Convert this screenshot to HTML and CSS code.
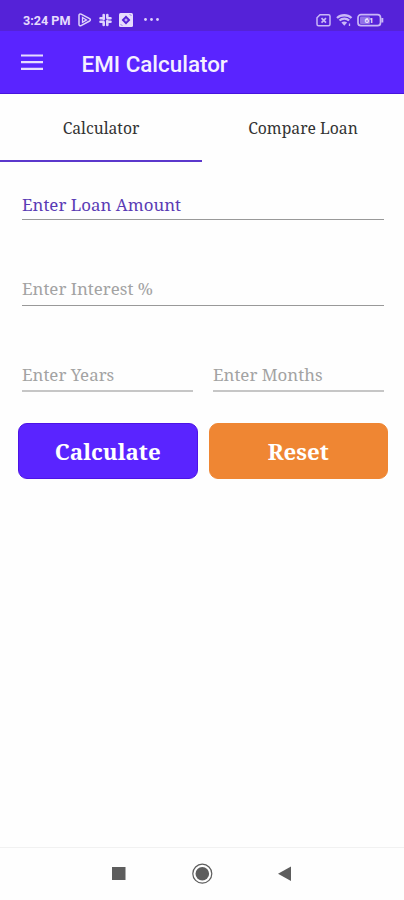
FILE: index.html
```
<!DOCTYPE html>
<html lang="en">
<head>
<meta charset="utf-8">
<meta name="viewport" content="width=device-width, initial-scale=1">
<title>EMI Calculator</title>
<link rel="stylesheet" href="styles.css">
</head>
<body>
<div class="status">
  <span class="time">3:24 PM</span>
  <svg class="notices" width="84" height="16" viewBox="0 0 84 16" fill="none" stroke="#ded2fc">
    <path d="M2 3.400c0-1.300 1-1.800 2.100-1.200l8.500 4.500c1 .6 1 1.700 0 2.300l-8.500 4.600C3 14.200 2 13.600 2 12.500z" stroke-width="1.500"/>
    <path d="M5.500 5.500l4 2.400-4 2.500z" stroke-width="1.300"/>
    <g stroke-width="2.600" stroke-linecap="round"><path d="M26.700 3v4M30.300 3v2.500M26.700 10.500V13M30.300 9v4M23.500 6.200h2.500M30.500 6.200h3M23.500 9.800h3M31 9.800h2.500"/></g>
    <rect x="42" y="1" width="14" height="14" rx="1.500" fill="#e6dcfd" stroke="none"/>
    <path d="M49 3.600L53.400 8 49 12.400 44.600 8z" fill="#5522d6" stroke="none"/>
    <path d="M47.500 8h3M49 6.500v3" stroke-width="1"/>
    <path d="M44 12.500l1 1M53 2.500l1 1" stroke="#5522d6"/>
    <g fill="#ded2fc" stroke="none"><circle cx="68.500" cy="7.500" r="1.400"/><circle cx="74.500" cy="7.500" r="1.400"/><circle cx="80.500" cy="7.500" r="1.400"/></g>
  </svg>
  <svg class="system" width="70" height="16" viewBox="0 0 70 16" fill="none" stroke="#c9b7f7">
    <path d="M5 2.700h8.500c1 0 1.500.5 1.500 1.500v8c0 1-.5 1.500-1.500 1.500h-10c-1 0-1.500-.5-1.500-1.500V5.700z" stroke-width="1.500"/>
    <path d="M6.500 6.200l4.500 4.500M11 6.200l-4.500 4.500" stroke-width="1.700"/>
    <path d="M22 6c4-3.700 10.500-3.700 14.500 0M24.500 8.500c2.700-2.500 7-2.500 9.600 0" stroke-width="2.300"/>
    <path d="M26.400 10.500c1.700-1.300 3.900-1.300 5.700 0L29.300 13.800z" fill="#c9b7f7" stroke="none"/>
    <path d="M34.500 11.500v2.500" stroke-width="1.300"/>
    <rect x="43" y="2.700" width="22.500" height="11" rx="3" stroke-width="1.700"/>
    <path d="M67.300 6v4.500" stroke-width="2"/>
    <rect x="45" y="4.500" width="10" height="7.400" rx="1" fill="#9270e8" stroke="none"/>
    <text x="54" y="11.200" text-anchor="middle" class="charge">61</text>
  </svg>
</div>
<header class="appbar">
  <svg width="22" height="16" viewBox="0 0 22 16"><path d="M0 1.500h22M0 8.200h22M0 14.900h22" stroke="#e6dcff" stroke-width="2.200"/></svg>
  <h1>EMI Calculator</h1>
</header>
<nav class="tabs">
  <div class="tab active"><span>Calculator</span></div>
  <div class="tab"><span>Compare Loan</span></div>
</nav>
<main>
  <div class="field focus"><span>Enter Loan Amount</span></div>
  <div class="field interest"><span>Enter Interest %</span></div>
  <div class="pair">
    <div class="field"><span>Enter Years</span></div>
    <div class="field"><span>Enter Months</span></div>
  </div>
  <div class="actions">
    <button class="calculate">Calculate</button>
    <button class="reset">Reset</button>
  </div>
</main>
<footer class="navbar">
  <svg width="404" height="52" viewBox="0 0 404 52">
    <rect x="112" y="19" width="13.500" height="13" fill="#5d5d5d"/>
    <circle cx="202.300" cy="25.700" r="9.500" fill="none" stroke="#5d5d5d" stroke-width="1.200"/>
    <circle cx="202.300" cy="25.700" r="6.800" fill="#5d5d5d"/>
    <path d="M278 25.700L291 18.500v14.500z" fill="#5d5d5d"/>
  </svg>
</footer>
</body>
</html>
```
FILE: styles.css
```
* { box-sizing: border-box; }
body {
  margin: 0;
  height: 900px;
  display: flex;
  flex-direction: column;
  background: #fefefe;
  font-family: "Noto Serif", "Droid Serif", "DejaVu Serif Condensed", "DejaVu Serif", serif;
  overflow: hidden;
}
.status {
  height: 31px;
  display: flex;
  align-items: center;
  padding: 9px 19px 0 23px;
  background: #5522d8;
  color: #e6dcfd;
  font: 700 12.600px/16px Roboto, sans-serif;
}
.status svg { display: block; }
.time { width: 54px; white-space: nowrap; padding-top: 1px; }
.system { margin-left: auto; }
.charge { font: 700 8px Roboto, sans-serif; fill: #efe8ff; stroke: none; }
.appbar {
  height: 63px;
  display: flex;
  align-items: center;
  gap: 38.500px;
  padding-left: 21px;
  background: #5a24ff;
  border-bottom: 1px solid #4714dd;
}
.appbar h1 {
  margin: 4px 0 0;
  color: #f5f0ff;
  font: 500 22.400px/30px Roboto, sans-serif;
}
.tabs { height: 68px; display: flex; }
.tab {
  flex: 1;
  padding-top: 22px;
  text-align: center;
  font-size: 15.700px;
  line-height: 24px;
  color: #333;
}
.tab.active { border-bottom: 2px solid #5b38cc; }
main { flex: 1; padding: 0 20px 0 22px; }
.field {
  height: 86px;
  padding-top: 30px;
  border-bottom: 1px solid #999;
  font-size: 16.900px;
  line-height: 25px;
  color: #a3a3a3;
  white-space: nowrap;
}
.field.focus { height: 58px; color: #5a3cb5; }
.field.interest { padding-top: 56px; }
.pair { display: flex; gap: 20px; }
.pair .field { flex: 1; padding-top: 56px; border-bottom: 2px solid #c6c6c6; }
.actions { display: flex; gap: 11px; margin: 31px -4px 0; }
button {
  flex: 1 1 0;
  min-width: 0;
  height: 56px;
  padding: 0;
  border: 1px solid transparent;
  border-radius: 9px;
  color: #fff;
  font: inherit;
  font-weight: 700;
  font-size: 22.300px;
}
.calculate { background: #5a24ff; border-color: #4d14e5; }
.reset { background: #ef8633; border-color: #ef8633; }
.navbar { height: 53px; border-top: 1px solid #f1f1f1; }
.navbar svg { display: block; }
```
